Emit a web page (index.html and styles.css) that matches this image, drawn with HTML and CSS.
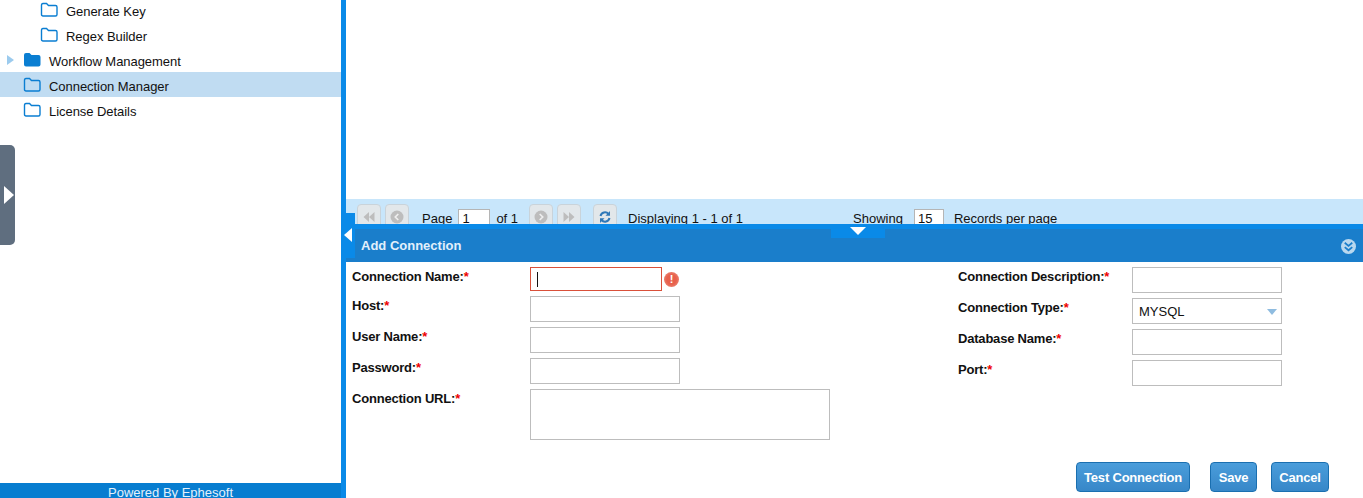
FILE: index.html
```html
<!DOCTYPE html>
<html lang="en">
<head>
<meta charset="utf-8">
<title>Connection Manager</title>
<link rel="stylesheet" href="styles.css">
</head>
<body>
<svg class="defs" width="0" height="0" aria-hidden="true">
  <symbol id="folder" viewBox="0 0 18 16"><path d="M1.5 3.5Q1.5 1.5 3 1.5H6.5L8.5 3.500H15.5Q17 3.500 17 5V12.5Q17 14 15.5 14H3Q1.5 14 1.5 12.5Z" fill="none" stroke="currentColor" stroke-width="1.4"/></symbol>
</svg>
<div class="app">
  <aside class="sidebar">
    <ul class="tree">
      <li class="node child"><svg class="folder"><use href="#folder"/></svg>Generate Key</li>
      <li class="node child"><svg class="folder"><use href="#folder"/></svg>Regex Builder</li>
      <li class="node"><span class="expander"></span><svg class="folder" viewBox="0 0 18 16"><path d="M1 3Q1 1 3 1H6.5L8.5 3H15.5Q17.500 3 17.500 5V12.500Q17.500 14.500 15.500 14.500H3Q1 14.500 1 12.500Z" fill="currentColor"/></svg>Workflow Management</li>
      <li class="node selected"><svg class="folder"><use href="#folder"/></svg>Connection Manager</li>
      <li class="node"><svg class="folder"><use href="#folder"/></svg>License Details</li>
    </ul>
    <div class="side-handle"><span class="handle-arrow"></span></div>
    <footer class="powered">Powered By Ephesoft</footer>
  </aside>
  <div class="splitter"></div>
  <main class="content">
    <div class="grid-area"></div>
    <div class="pager">
      <button class="pg-btn"><svg viewBox="0 0 14 14"><path d="M7 2 1.500 7 7 12ZM12.500 2 7 7 12.500 12Z" fill="#bdbdbd"/></svg></button>
      <button class="pg-btn"><svg viewBox="0 0 14 14"><circle cx="7" cy="7" r="6.500" fill="#bdbdbd"/><path d="M8.300 4 5.300 7l3 3" fill="none" stroke="#eee" stroke-width="1.700"/></svg></button>
      <span class="pg-page">Page</span>
      <span class="pg-input pg-cur">1</span>
      <span class="pg-of">of 1</span>
      <button class="pg-btn"><svg viewBox="0 0 14 14"><circle cx="7" cy="7" r="6.500" fill="#bdbdbd"/><path d="M5.700 4l3 3-3 3" fill="none" stroke="#eee" stroke-width="1.700"/></svg></button>
      <button class="pg-btn"><svg viewBox="0 0 14 14"><path d="M1.500 2 7 7 1.500 12ZM7 2 12.500 7 7 12Z" fill="#bdbdbd"/></svg></button>
      <button class="pg-btn pg-refresh"><svg viewBox="0 0 14 14"><path d="M2.500 6A4.600 4.600 0 0 1 10.500 4M11.500 8A4.600 4.600 0 0 1 3.500 10" fill="none" stroke="#2f78b8" stroke-width="2"/><path d="M12 1V5.800H7.500ZM2 13V8.200H6.500Z" fill="#2f78b8"/></svg></button>
      <span class="pg-display">Displaying 1 - 1 of 1</span>
      <span class="pg-showing">Showing</span>
      <span class="pg-input pg-size">15</span>
      <span class="pg-records">Records per page</span>
    </div>
    <section class="panel">
      <div class="panel-strip"><span class="tab-left"></span><span class="tab-down"></span></div>
      <header class="panel-head">
        <h2>Add Connection</h2>
        <svg class="collapse" viewBox="0 0 14 14"><circle cx="7" cy="7" r="7" fill="#b9d8ef"/><path d="M3.500 3.500 7 6.500l3.500-3M3.500 7.500 7 10.500l3.500-3" fill="none" stroke="#1a7ecb" stroke-width="1.600"/></svg>
      </header>
      <form class="form">
        <div class="col col-left">
          <div class="row"><label>Connection Name:<b>*</b></label><div class="field"><span class="input error"><i class="caret"></i></span><span class="err-icon">!</span></div></div>
          <div class="row"><label>Host:<b>*</b></label><div class="field"><span class="input"></span></div></div>
          <div class="row"><label>User Name:<b>*</b></label><div class="field"><span class="input"></span></div></div>
          <div class="row"><label>Password:<b>*</b></label><div class="field"><span class="input"></span></div></div>
          <div class="row"><label>Connection URL:<b>*</b></label><div class="field"><span class="input area"></span></div></div>
        </div>
        <div class="col col-right">
          <div class="row"><label>Connection Description:<b>*</b></label><div class="field"><span class="input"></span></div></div>
          <div class="row"><label>Connection Type:<b>*</b></label><div class="field"><span class="input select">MYSQL<i class="sel-arrow"></i></span></div></div>
          <div class="row"><label>Database Name:<b>*</b></label><div class="field"><span class="input"></span></div></div>
          <div class="row"><label>Port:<b>*</b></label><div class="field"><span class="input"></span></div></div>
        </div>
      </form>
      <div class="actions">
        <button class="btn btn-test">Test Connection</button>
        <button class="btn btn-save">Save</button>
        <button class="btn btn-cancel">Cancel</button>
      </div>
    </section>
  </main>
</div>
</body>
</html>
```
FILE: styles.css
```css
* { box-sizing: border-box; }
html, body { margin: 0; height: 498px; overflow: hidden; background: #fff; }
body { font-family: "Liberation Sans", Arial, sans-serif; font-size: 13px; color: #111; }
.defs { position: absolute; }
.app { display: flex; height: 498px; }

.sidebar { position: relative; width: 341px; display: flex; flex-direction: column; justify-content: space-between; overflow: hidden; }
.tree { list-style: none; margin: -3px 0 0; padding: 0; letter-spacing: -0.05px; }
.node { display: flex; align-items: center; height: 25px; padding-top: 4px; padding-left: 23px; position: relative; white-space: nowrap; }
.node.child { padding-left: 40px; }
.node.selected { background: #c0dcf2; }
.folder { width: 18px; height: 16px; margin-right: 8px; color: #0a7ed2; position: relative; top: -2px; }
.expander { position: absolute; left: 7px; top: 8px; border-left: 7px solid #9ccbee; border-top: 5px solid transparent; border-bottom: 5px solid transparent; }
.side-handle { position: absolute; left: 0; top: 145px; width: 15px; height: 100px; background: #5f6e7f; border-radius: 0 5px 5px 0; display: flex; align-items: center; }
.handle-arrow { margin-left: 4px; border-left: 10px solid #fff; border-top: 9px solid transparent; border-bottom: 9px solid transparent; }
.powered { height: 15px; background: #077dd0; color: #e3f1fb; text-align: center; line-height: 20px; font-size: 13px; overflow: hidden; }

.splitter { width: 5px; background: #0a8ae8; }
.content { flex: 1; min-width: 0; display: flex; flex-direction: column; }
.grid-area { height: 199px; }

.pager { height: 25px; background: #c8e6fb; display: flex; align-items: flex-start; padding: 5px 0 0 11px; overflow: hidden; white-space: nowrap; }
.pager span { line-height: 17px; padding-top: 6px; }
.pg-btn { width: 24px; height: 25px; padding: 0; flex: none; background: #e2e7ea; border: 1px solid #c9d3da; border-radius: 4px; display: flex; align-items: center; justify-content: center; margin-right: 4px; }
.pg-btn svg { width: 14px; height: 14px; }
.pg-refresh { margin-left: 8px; }
.pager .pg-input { width: 32px; height: 24px; padding: 1px 0 0 3px; margin-top: 5px; line-height: 16px; background: #fff; border: 1px solid #b5b5b5; }
.pg-page { margin-left: 9px; margin-right: 6px; }
.pg-of { margin-left: 6px; margin-right: 11px; }
.pg-display { margin-left: 7px; width: 225px; }
.pager .pg-size { width: 30px; margin-left: 11px; margin-right: 10px; }

.panel { flex: 1; display: flex; flex-direction: column; min-height: 0; position: relative; }
.panel-strip { height: 5px; background: #0a8ae8; position: relative; }
.tab-left { position: absolute; left: 0; top: -11px; width: 9px; height: 45px; background: #0a8ae8; }
.tab-left::after { content: ""; position: absolute; left: -2px; top: 15px; border-right: 8px solid #fff; border-top: 7px solid transparent; border-bottom: 7px solid transparent; }
.tab-down { position: absolute; left: 485px; top: 0; width: 54px; height: 14px; background: #0a8ae8; z-index: 1; }
.tab-down::after { content: ""; position: absolute; left: 19px; top: 3px; border-top: 8px solid #fff; border-left: 8px solid transparent; border-right: 8px solid transparent; }
.panel-head { height: 33px; background: #1a7ecb; display: flex; align-items: center; justify-content: space-between; padding: 0 7px 0 15px; }
.panel-head h2 { margin: 0; font-size: 13px; font-weight: bold; color: #e2f0fb; }
.collapse { width: 15px; height: 15px; position: relative; top: 1px; }

.form { display: flex; height: 200px; padding-top: 5px; }
.col-left { width: 612px; padding-left: 6px; }
.col-right { flex: 1; }
.row { display: flex; align-items: flex-start; margin-bottom: 5px; }
.row label { font-weight: bold; color: #111; padding-top: 2px; letter-spacing: -0.2px; }
.row label b { color: #e00; }
.col-left label { width: 178px; }
.col-right label { width: 174px; }
.field { display: flex; align-items: center; }
.input { display: flex; align-items: center; width: 150px; height: 26px; border: 1px solid #bdbdbd; background: #fff; position: relative; }
.input.error { width: 132px; height: 24px; border-color: #d9503a; }
.input.area { width: 300px; height: 51px; }
.input.select { padding-left: 6px; }
.caret { width: 1px; height: 15px; background: #111; margin-left: 6px; }
.sel-arrow { position: absolute; right: 4px; top: 10px; border-top: 6px solid #8fbce0; border-left: 5px solid transparent; border-right: 5px solid transparent; }
.err-icon { width: 15px; height: 15px; margin-left: 2px; border-radius: 50%; background: radial-gradient(circle, #e8604c 45%, #eb9d8e); color: #fff; font-size: 11px; font-weight: bold; line-height: 15px; text-align: center; }

.actions { display: flex; justify-content: flex-end; padding-right: 34px; }
.btn { height: 30px; padding: 0; border: 1px solid #1a6fb0; border-radius: 4px; background: linear-gradient(#4a9ddb, #3787c8); color: #fff; font: bold 13px "Liberation Sans", Arial, sans-serif; letter-spacing: -0.2px; }
.btn-test { width: 114px; margin-right: 20px; }
.btn-save { width: 47px; margin-right: 14px; }
.btn-cancel { width: 58px; }
```
